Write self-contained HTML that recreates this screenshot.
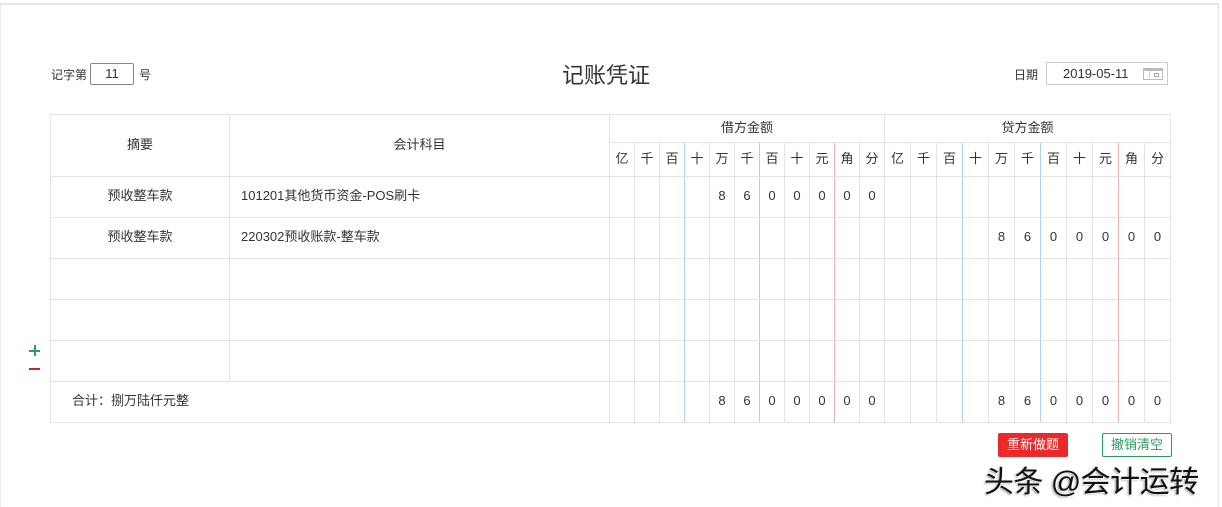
<!DOCTYPE html>
<html><head><meta charset="utf-8"><style>
*{margin:0;padding:0;box-sizing:border-box}
body{width:1222px;height:507px;background:#fff;position:relative;overflow:hidden;font-family:"Liberation Sans","Noto Sans CJK SC",sans-serif;color:#333;font-size:13px}
.frame{position:absolute;left:0;top:3px;width:1219px;height:504px;border-top:2px solid #e6e6e6;border-left:1px solid #ececec;border-right:1px solid #e2e2e2}
.abs{position:absolute}
table{position:absolute;left:50px;top:114px;border-collapse:collapse;table-layout:fixed}
td{border:1px solid #e3e3e3;text-align:center;padding:0;white-space:nowrap;line-height:14px;padding-bottom:2px}
.b{border-right-color:#a9d3ef}
.r{border-right-color:#f0b3b3}
</style></head><body>
<div class="frame"></div>
<div class="abs" style="left:51px;top:66px;font-size:12px">记字第</div>
<div class="abs" style="left:90px;top:63px;width:44px;height:22px;border:1px solid #888;border-radius:2px;text-align:center;line-height:20px;font-size:13px">11</div>
<div class="abs" style="left:139px;top:66px;font-size:12px">号</div>
<div class="abs" style="left:562px;top:58px;font-size:22px;color:#333">记账凭证</div>
<div class="abs" style="left:1014px;top:66px;font-size:12px">日期</div>
<div class="abs" style="left:1046px;top:62px;width:122px;height:23px;border:1px solid #ccc;line-height:21px;font-size:13px;padding-left:16px">2019-05-11
<div class="abs" style="left:96px;top:5px;width:20px;height:12px;border:1px solid #bbb;border-top:3px solid #bbb"><div class="abs" style="left:5px;top:0;width:1px;height:7px;background:#ccc"></div><div class="abs" style="left:10px;top:2px;width:5px;height:4px;border:1px solid #aaa"></div></div></div>
<table>
<colgroup><col style="width:179px"><col style="width:380px">
<col style="width:25px"><col style="width:25px"><col style="width:25px"><col style="width:25px"><col style="width:25px"><col style="width:25px"><col style="width:25px"><col style="width:25px"><col style="width:25px"><col style="width:25px"><col style="width:25px">
<col style="width:26px"><col style="width:26px"><col style="width:26px"><col style="width:26px"><col style="width:26px"><col style="width:26px"><col style="width:26px"><col style="width:26px"><col style="width:26px"><col style="width:26px"><col style="width:26px"></colgroup>
<tr style="height:28px"><td rowspan="2">摘要</td><td rowspan="2">会计科目</td><td colspan="11">借方金额</td><td colspan="11">贷方金额</td></tr>
<tr style="height:34px"><td>亿</td><td>千</td><td class="b">百</td><td>十</td><td>万</td><td class="b">千</td><td>百</td><td>十</td><td class="r">元</td><td>角</td><td>分</td><td>亿</td><td>千</td><td class="b">百</td><td>十</td><td>万</td><td class="b">千</td><td>百</td><td>十</td><td class="r">元</td><td>角</td><td>分</td></tr>
<tr style="height:41px"><td>预收整车款</td><td style="text-align:left;padding-left:11px">101201其他货币资金-POS刷卡</td><td></td><td></td><td class="b"></td><td></td><td>8</td><td class="b">6</td><td>0</td><td>0</td><td class="r">0</td><td>0</td><td>0</td><td></td><td></td><td class="b"></td><td></td><td></td><td class="b"></td><td></td><td></td><td class="r"></td><td></td><td></td></tr>
<tr style="height:41px"><td>预收整车款</td><td style="text-align:left;padding-left:11px">220302预收账款-整车款</td><td></td><td></td><td class="b"></td><td></td><td></td><td class="b"></td><td></td><td></td><td class="r"></td><td></td><td></td><td></td><td></td><td class="b"></td><td></td><td>8</td><td class="b">6</td><td>0</td><td>0</td><td class="r">0</td><td>0</td><td>0</td></tr>
<tr style="height:41px"><td></td><td></td><td></td><td></td><td class="b"></td><td></td><td></td><td class="b"></td><td></td><td></td><td class="r"></td><td></td><td></td><td></td><td></td><td class="b"></td><td></td><td></td><td class="b"></td><td></td><td></td><td class="r"></td><td></td><td></td></tr>
<tr style="height:41px"><td></td><td></td><td></td><td></td><td class="b"></td><td></td><td></td><td class="b"></td><td></td><td></td><td class="r"></td><td></td><td></td><td></td><td></td><td class="b"></td><td></td><td></td><td class="b"></td><td></td><td></td><td class="r"></td><td></td><td></td></tr>
<tr style="height:41px"><td></td><td></td><td></td><td></td><td class="b"></td><td></td><td></td><td class="b"></td><td></td><td></td><td class="r"></td><td></td><td></td><td></td><td></td><td class="b"></td><td></td><td></td><td class="b"></td><td></td><td></td><td class="r"></td><td></td><td></td></tr>
<tr style="height:41px"><td colspan="2" style="text-align:left;padding-left:21px">合计：捌万陆仟元整</td><td></td><td></td><td class="b"></td><td></td><td>8</td><td class="b">6</td><td>0</td><td>0</td><td class="r">0</td><td>0</td><td>0</td><td></td><td></td><td class="b"></td><td></td><td>8</td><td class="b">6</td><td>0</td><td>0</td><td class="r">0</td><td>0</td><td>0</td></tr>
</table>
<div class="abs" style="left:29px;top:350px;width:11px;height:2px;background:#2e9a5e"></div>
<div class="abs" style="left:34px;top:345px;width:2px;height:11px;background:#2e9a5e"></div>
<div class="abs" style="left:29px;top:368px;width:11px;height:2px;background:#c62828"></div>
<div class="abs" style="left:998px;top:433px;width:70px;height:24px;background:#ea2a2a;color:#fff;border-radius:2px;text-align:center;line-height:24px;font-size:13px">重新做题</div>
<div class="abs" style="left:1102px;top:433px;width:70px;height:24px;border:1px solid #2e9a5e;color:#2e9a5e;border-radius:2px;text-align:center;line-height:22px;font-size:13px">撤销清空</div>
<div class="abs" style="left:984px;top:457px;font-size:30px;letter-spacing:-0.5px;color:#111;text-shadow:1px 1px 1px #fff,-1px 1px 2px #888">头条 @会计运转</div>
</body></html>
